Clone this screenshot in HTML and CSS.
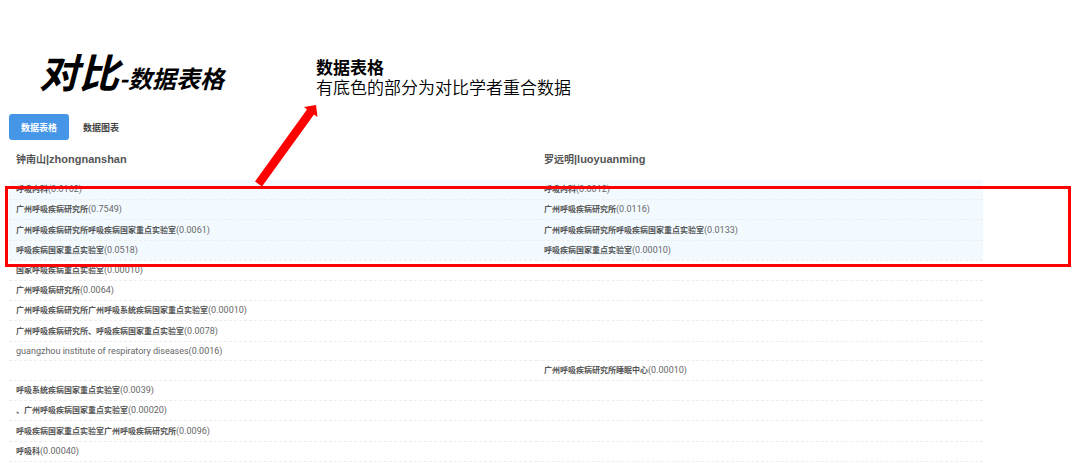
FILE: index.html
```
<!DOCTYPE html>
<html lang="zh-CN">
<head>
    <meta charset="UTF-8">
    <title>对比-数据表格</title>
    <link rel="stylesheet" href="styles.css">
</head>
<body>
    <div class="page">
        <header class="header">
            <h1 class="title">对比<span class="subtitle">-数据表格</span></h1>
            <div class="note">
                <strong>数据表格</strong>
                <p>有底色的部分为对比学者重合数据</p>
            </div>
        </header>

        <div class="tabs">
            <button type="button" class="tab active">数据表格</button>
            <button type="button" class="tab">数据图表</button>
        </div>

        <table class="compare">
            <thead>
                <tr><th><span class="name">钟南山</span>|zhongnanshan</th><th><span class="name">罗远明</span>|luoyuanming</th></tr>
            </thead>
            <tbody>
                <tr class="same"><td><b>呼吸内科</b>(0.0162)</td><td><b>呼吸内科</b>(0.0012)</td></tr>
                <tr class="same"><td><b>广州呼吸疾病研究所</b>(0.7549)</td><td><b>广州呼吸疾病研究所</b>(0.0116)</td></tr>
                <tr class="same"><td><b>广州呼吸疾病研究所呼吸疾病国家重点实验室</b>(0.0061)</td><td><b>广州呼吸疾病研究所呼吸疾病国家重点实验室</b>(0.0133)</td></tr>
                <tr class="same"><td><b>呼吸疾病国家重点实验室</b>(0.0518)</td><td><b>呼吸疾病国家重点实验室</b>(0.00010)</td></tr>
                <tr><td><b>国家呼吸疾病重点实验室</b>(0.00010)</td><td></td></tr>
                <tr><td><b>广州呼吸病研究所</b>(0.0064)</td><td></td></tr>
                <tr><td><b>广州呼吸疾病研究所广州呼吸系统疾病国家重点实验室</b>(0.00010)</td><td></td></tr>
                <tr><td><b>广州呼吸疾病研究所、呼吸疾病国家重点实验室</b>(0.0078)</td><td></td></tr>
                <tr><td>guangzhou institute of respiratory diseases(0.0016)</td><td></td></tr>
                <tr><td></td><td><b>广州呼吸疾病研究所睡眠中心</b>(0.00010)</td></tr>
                <tr><td><b>呼吸系统疾病国家重点实验室</b>(0.0039)</td><td></td></tr>
                <tr><td><b>、广州呼吸疾病国家重点实验室</b>(0.00020)</td><td></td></tr>
                <tr><td><b>呼吸疾病国家重点实验室广州呼吸疾病研究所</b>(0.0096)</td><td></td></tr>
                <tr><td><b>呼吸科</b>(0.00040)</td><td></td></tr>
            </tbody>
        </table>

        <div class="frame"></div>
        <svg class="arrow" width="64" height="84" viewBox="0 0 64 84">
            <path d="M62 1 L50 3 L53 5.500 L1 77.500 L8 82.500 L60 10.500 L63.500 13 Z" fill="#ff0000"/>
        </svg>
    </div>
</body>
</html>
```

FILE: styles.css
```
body {
    margin: 0;
    background-color: #fff;
    color: #666;
    font-family: "Liberation Sans", "Noto Sans CJK SC", sans-serif;
    font-size: 9px;
}

.page {
    position: relative;
    padding: 48px 97px 0 9px;
}

.header {
    display: flex;
    align-items: flex-start;
    gap: 92px;
    padding-left: 30px;
    color: #000;
}

.title {
    margin: 0;
    font-family: "Noto Sans CJK SC", sans-serif;
    font-size: 40px;
    line-height: 46px;
    font-style: italic;
    font-weight: bold;
}

.subtitle {
    font-size: 24px;
    line-height: 24px;
}

.note {
    padding-top: 9px;
    font-family: "Noto Sans CJK SC", sans-serif;
    font-size: 17px;
    line-height: 20px;
}

.note strong {
    display: block;
}

.note p {
    margin: 0;
    font-weight: 350;
}

.tabs {
    display: flex;
    gap: 2px;
    margin-top: 17px;
}

.tab {
    padding: 0 12px;
    height: 26px;
    border: none;
    border-radius: 3px;
    background-color: transparent;
    color: #444;
    font-family: inherit;
    font-size: 9px;
    font-weight: bold;
    cursor: pointer;
}

.tab.active {
    background-color: #4596e6;
    color: #fff;
}

.compare {
    width: 100%;
    height: 322px;
    border-collapse: collapse;
    table-layout: fixed;
}

.compare th {
    height: 36px;
    padding: 0 7px 4px;
    text-align: left;
    font-size: 11px;
    color: #555;
}

.compare th:first-child {
    width: 514px;
}

.name {
    font-size: 10px;
}

.compare td {
    padding: 0 7px;
    font-family: Roboto, "Noto Sans CJK SC", sans-serif;
    line-height: 18px;
    border-bottom: 1px dashed #eee;
}

.compare b {
    font-size: 8px;
    color: #555;
}

.same {
    background-color: #f3faff;
}

.frame {
    position: absolute;
    top: 186px;
    left: 5px;
    right: 9px;
    height: 75px;
    border: 3px solid #ff0000;
}

.arrow {
    position: absolute;
    top: 104px;
    left: 254px;
}
```
